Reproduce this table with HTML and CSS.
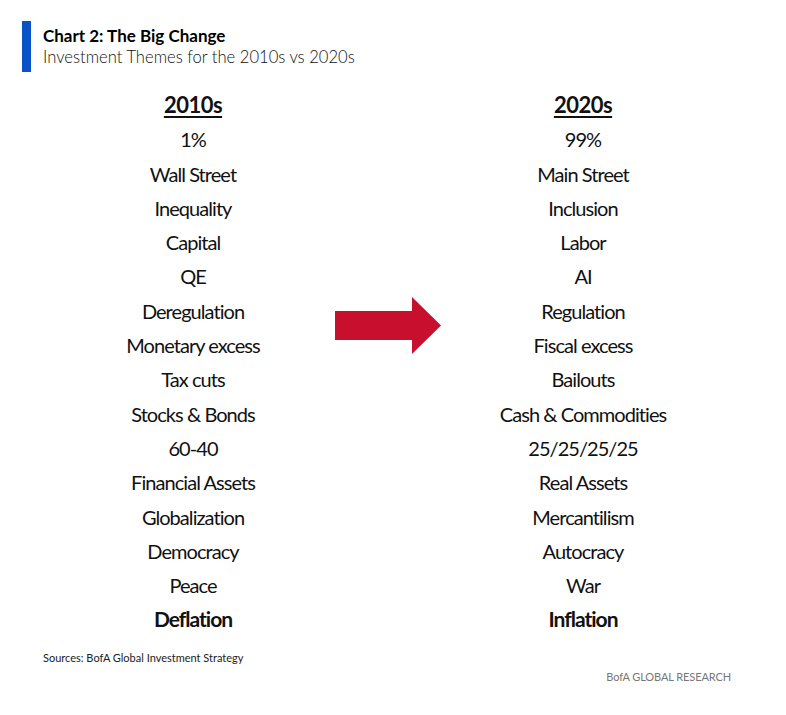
FILE: index.html
```html
<!DOCTYPE html>
<html lang="en">
<head>
<meta charset="utf-8">
<title>Chart 2: The Big Change</title>
<link rel="stylesheet" href="styles.css">
</head>
<body>
<div class="page">
  <header class="chart-head">
    <div class="accent"></div>
    <div class="titles">
      <div class="title">Chart 2: The Big Change</div>
      <div class="subtitle">Investment Themes for the 2010s vs 2020s</div>
    </div>
  </header>

  <section class="compare">
    <ul class="col">
      <li class="col-head">2010s</li>
      <li>1%</li>
      <li>Wall Street</li>
      <li>Inequality</li>
      <li>Capital</li>
      <li>QE</li>
      <li>Deregulation</li>
      <li>Monetary excess</li>
      <li>Tax cuts</li>
      <li>Stocks &amp; Bonds</li>
      <li>60-40</li>
      <li>Financial Assets</li>
      <li>Globalization</li>
      <li>Democracy</li>
      <li>Peace</li>
      <li class="strong">Deflation</li>
    </ul>
    <div class="arrow-cell">
      <svg class="arrow" width="106" height="57" viewBox="0 0 106 57">
        <polygon points="0,14 77,14 77,0 106,28.5 77,57 77,43 0,43" fill="#c8102e"/>
      </svg>
    </div>
    <ul class="col">
      <li class="col-head">2020s</li>
      <li>99%</li>
      <li>Main Street</li>
      <li>Inclusion</li>
      <li>Labor</li>
      <li>AI</li>
      <li>Regulation</li>
      <li>Fiscal excess</li>
      <li>Bailouts</li>
      <li>Cash &amp; Commodities</li>
      <li>25/25/25/25</li>
      <li>Real Assets</li>
      <li>Mercantilism</li>
      <li>Autocracy</li>
      <li>War</li>
      <li class="strong">Inflation</li>
    </ul>
  </section>

  <footer class="foot">
    <div class="sources">Sources: BofA Global Investment Strategy</div>
    <div class="brand">BofA GLOBAL RESEARCH</div>
  </footer>
</div>
</body>
</html>
```

FILE: styles.css
```css
html, body {
  margin: 0;
  padding: 0;
  background: #ffffff;
}

body {
  font-family: Lato, "Liberation Sans", sans-serif;
  color: #111111;
}

.page {
  width: 786px;
  height: 715px;
  box-sizing: border-box;
  padding: 21px 0 0 22px;
}

.chart-head {
  display: flex;
  align-items: stretch;
  gap: 12px;
  height: 51px;
}

.accent {
  width: 9px;
  background: #0a52c8;
}

.titles {
  display: flex;
  flex-direction: column;
  padding-top: 5px;
}

.title {
  font-weight: bold;
  font-size: 17px;
  line-height: 20px;
  color: #000;
}

.subtitle {
  margin-top: 1px;
  font-size: 16.6px;
  font-weight: 300;
  line-height: 20px;
  color: #111;
}

.compare {
  display: flex;
  margin-top: 16px;
  margin-left: 71px;
}

.col {
  list-style: none;
  margin: 0;
  padding: 0;
  width: 200px;
  text-align: center;
  font-family: Lato, "Liberation Sans", sans-serif;
  font-size: 20px;
  line-height: 34.3px;
  letter-spacing: -0.95px;
  color: #111;
}

.col-head {
  font-weight: bold;
  font-size: 22px;
  letter-spacing: -0.5px;
  text-decoration: underline;
  text-decoration-thickness: 2px;
  text-underline-offset: 3px;
}

.strong {
  font-weight: bold;
  font-size: 21px;
  letter-spacing: -1px;
}

.arrow-cell {
  width: 190px;
  display: flex;
  justify-content: center;
  padding-top: 209px;
  align-items: flex-start;
}

.arrow {
  display: block;
}

.foot {
  margin-top: 14px;
  margin-left: 21px;
  width: 688px;
  display: flex;
  flex-direction: column;
}

.sources {
  font-size: 11px;
  line-height: 14px;
  color: #222;
}

.brand {
  align-self: flex-end;
  margin-top: 5px;
  font-size: 11px;
  line-height: 14px;
  letter-spacing: -0.1px;
  color: #777;
}
```
